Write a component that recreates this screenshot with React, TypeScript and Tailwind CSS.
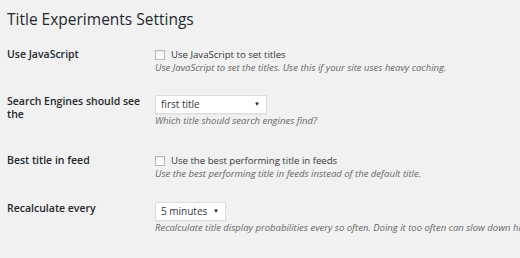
import { ReactNode } from "react";

function Row(props: { label: string; children: ReactNode; className?: string }) {
  return (
    <div className={"flex " + (props.className ?? "")}>
      <div className="w-[148px] shrink-0 pr-[4px] text-[10.5px] font-semibold leading-[13px] text-[#23282d]">
        {props.label}
      </div>
      <div className="flex flex-col">{props.children}</div>
    </div>
  );
}

function Checkbox(props: { text: string }) {
  return (
    <label className="flex items-center gap-[6px] text-[9.6px] leading-[13px] text-[#32373c]">
      <span className="h-[10px] w-[10px] border border-[#b4b9be] bg-white shadow-[inset_0_1px_2px_rgba(0,0,0,0.1)]"></span>
      {props.text}
    </label>
  );
}

function Select(props: { value: string; width: string }) {
  return (
    <div
      className={
        "flex h-[19px] items-center justify-between border border-[#ddd] bg-white pl-[5px] pr-[6px] text-[10px] text-[#32373c] shadow-[0_1px_1px_rgba(0,0,0,0.04)] " +
        props.width
      }
    >
      <span>{props.value}</span>
      <span className="text-[6px] text-[#222]">▼</span>
    </div>
  );
}

function Desc(props: { children: ReactNode }) {
  return <p className="mt-[1px] whitespace-nowrap text-[9.5px] italic leading-[12px] text-[#666]">{props.children}</p>;
}

export default function App() {
  return (
    <div className="h-[258px] w-[520px] overflow-hidden bg-[#f1f1f1] px-[7px] pt-[9px] font-['Open_Sans',sans-serif]">
      <h1 className="text-[15.5px] leading-[20px] font-normal text-[#23282d]">Title Experiments Settings</h1>

      <div className="mt-[17px] flex flex-col">
        <Row label="Use JavaScript" className="pt-[2px]">
          <Checkbox text="Use JavaScript to set titles" />
          <Desc>Use JavaScript to set the titles. Use this if your site uses heavy caching.</Desc>
        </Row>
        <Row label="Search Engines should see the" className="mt-[21px]">
          <Select value="first title" width="w-[112px]" />
          <Desc>Which title should search engines find?</Desc>
        </Row>
        <Row label="Best title in feed" className="mt-[27px]">
          <Checkbox text="Use the best performing title in feeds" />
          <Desc>Use the best performing title in feeds instead of the default title.</Desc>
        </Row>
        <Row label="Recalculate every" className="mt-[22px]">
          <Select value="5 minutes" width="w-[71px]" />
          <Desc>Recalculate title display probabilities every so often. Doing it too often can slow down high traffic sites.</Desc>
        </Row>
      </div>
    </div>
  );
}
